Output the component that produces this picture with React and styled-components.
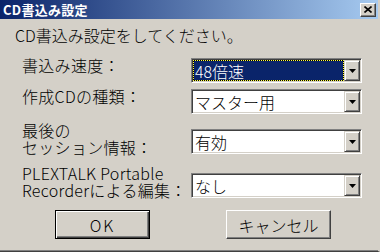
import styled, { createGlobalStyle } from 'styled-components';

const GlobalStyle = createGlobalStyle`
  html, body {
    margin: 0;
    padding: 0;
    background: #d4d0c8;
  }
  body {
    font-family: "Noto Sans CJK JP", "Liberation Sans", sans-serif;
  }
`;

const Window = styled.div`
  width: 380px;
  height: 252px;
  box-sizing: border-box;
  background: #d4d0c8;
  border-right: 2px solid #d4d0c8;
  border-bottom: 1px solid #404040;
  box-shadow: inset 0 -1px 0 #808080;
  display: flex;
  flex-direction: column;
  overflow: hidden;
`;

const TitleBar = styled.div`
  height: 19px;
  flex-shrink: 0;
  display: flex;
  align-items: center;
  justify-content: space-between;
  padding: 0 2px 0 3px;
  background: linear-gradient(to right, #0a246a, #a6caf0);
`;

const Title = styled.span`
  color: #fff;
  font-weight: bold;
  font-size: 13px;
  line-height: 1;
  letter-spacing: 0.3px;
`;

const CloseButton = styled.div`
  width: 16px;
  height: 14px;
  box-sizing: border-box;
  background: #d4d0c8;
  border: 1px solid;
  border-color: #fff #404040 #404040 #fff;
  box-shadow: inset -1px -1px 0 #808080;
  display: flex;
  align-items: center;
  justify-content: center;
`;

const Body = styled.div`
  flex: 1;
  display: flex;
  flex-direction: column;
  padding: 7px 0 0 15px;
  font-weight: 300;
`;

const Message = styled.div`
  font-size: 16px;
  line-height: 18px;
  color: #000;
`;

const Form = styled.div`
  display: flex;
  flex-direction: column;
  margin: 13px 0 0 7px;
`;

const Row = styled.div`
  display: flex;
  align-items: flex-start;
  margin-top: ${(p) => p.$gap}px;
`;

const Label = styled.div`
  width: 169px;
  font-size: 16px;
  line-height: 17px;
  color: #000;
  white-space: nowrap;
  letter-spacing: 0.3px;
`;

const Combo = styled.div`
  width: 171px;
  height: 25px;
  margin-top: ${(p) => p.$offset}px;
  box-sizing: border-box;
  border: 1px solid;
  border-color: #808080 #fff #fff #808080;
  box-shadow: inset 1px 1px 0 #404040, inset -1px -1px 0 #d4d0c8;
  background: #fff;
  display: flex;
  padding: 1px;
`;

const Field = styled.div`
  flex: 1;
  display: flex;
  align-items: center;
  padding: 0 0 0 2px;
  font-size: 16px;
  color: #000;
`;

const Selected = styled.div`
  flex: 1;
  align-self: stretch;
  display: flex;
  align-items: center;
  margin-left: -2px;
  padding-left: 1px;
  color: #fff;
  border: 1px dotted #ffff40;
  background: linear-gradient(#0a246a, #0a246a) padding-box, #000 border-box;
`;

const DropButton = styled.div`
  width: 16px;
  box-sizing: border-box;
  background: #d4d0c8;
  border: 1px solid;
  border-color: #d4d0c8 #404040 #404040 #d4d0c8;
  box-shadow: inset 1px 1px 0 #fff, inset -1px -1px 0 #808080;
  display: flex;
  align-items: center;
  justify-content: center;
`;

const Buttons = styled.div`
  display: flex;
  margin: 11px 0 0 40px;
  gap: 76px;
`;

const Button = styled.div`
  width: ${(p) => p.$w}px;
  height: 29px;
  box-sizing: border-box;
  background: #d4d0c8;
  border: 1px solid;
  border-color: ${(p) => (p.$default ? '#000' : '#fff #404040 #404040 #fff')};
  box-shadow: ${(p) =>
    p.$default
      ? 'inset 1px 1px 0 #fff, inset -1px -1px 0 #404040, inset -2px -2px 0 #808080'
      : 'inset -1px -1px 0 #808080'};
  display: flex;
  align-items: center;
  justify-content: center;
  font-size: 16px;
  color: #000;
  letter-spacing: ${(p) => p.$spacing}px;
`;

const Arrow = () => (
  <svg width="7" height="4" viewBox="0 0 7 4">
    <path d="M0 0h7L3.5 4z" fill="#000" />
  </svg>
);

const CloseIcon = () => (
  <svg width="8" height="7" viewBox="0 0 8 7">
    <path d="M0.5 0.5l7 6M7.5 0.5l-7 6" stroke="#000" strokeWidth="1.6" />
  </svg>
);

const rows = [
  { label: ['書込み速度：'], value: '48倍速', selected: true, gap: 0, offset: 1 },
  { label: ['作成CDの種類：'], value: 'マスター用', gap: 5, offset: 1 },
  { label: ['最後の', 'セッション情報：'], value: '有効', gap: 8, offset: 7 },
  { label: ['PLEXTALK Portable', 'Recorderによる編集：'], value: 'なし', gap: 9, offset: 8 },
];

export default function App() {
  return (
    <>
      <GlobalStyle />
      <Window>
        <TitleBar>
          <Title>CD書込み設定</Title>
          <CloseButton>
            <CloseIcon />
          </CloseButton>
        </TitleBar>
        <Body>
          <Message>CD書込み設定をしてください。</Message>
          <Form>
            {rows.map((r, i) => (
              <Row key={i} $gap={r.gap}>
                <Label>
                  {r.label.map((l, j) => (
                    <div key={j}>{l}</div>
                  ))}
                </Label>
                <Combo $offset={r.offset}>
                  <Field>
                    {r.selected ? <Selected>{r.value}</Selected> : r.value}
                  </Field>
                  <DropButton>
                    <Arrow />
                  </DropButton>
                </Combo>
              </Row>
            ))}
          </Form>
          <Buttons>
            <Button $w={95} $spacing={2} $default>OK</Button>
            <Button $w={105} $spacing={0}>キャンセル</Button>
          </Buttons>
        </Body>
      </Window>
    </>
  );
}
